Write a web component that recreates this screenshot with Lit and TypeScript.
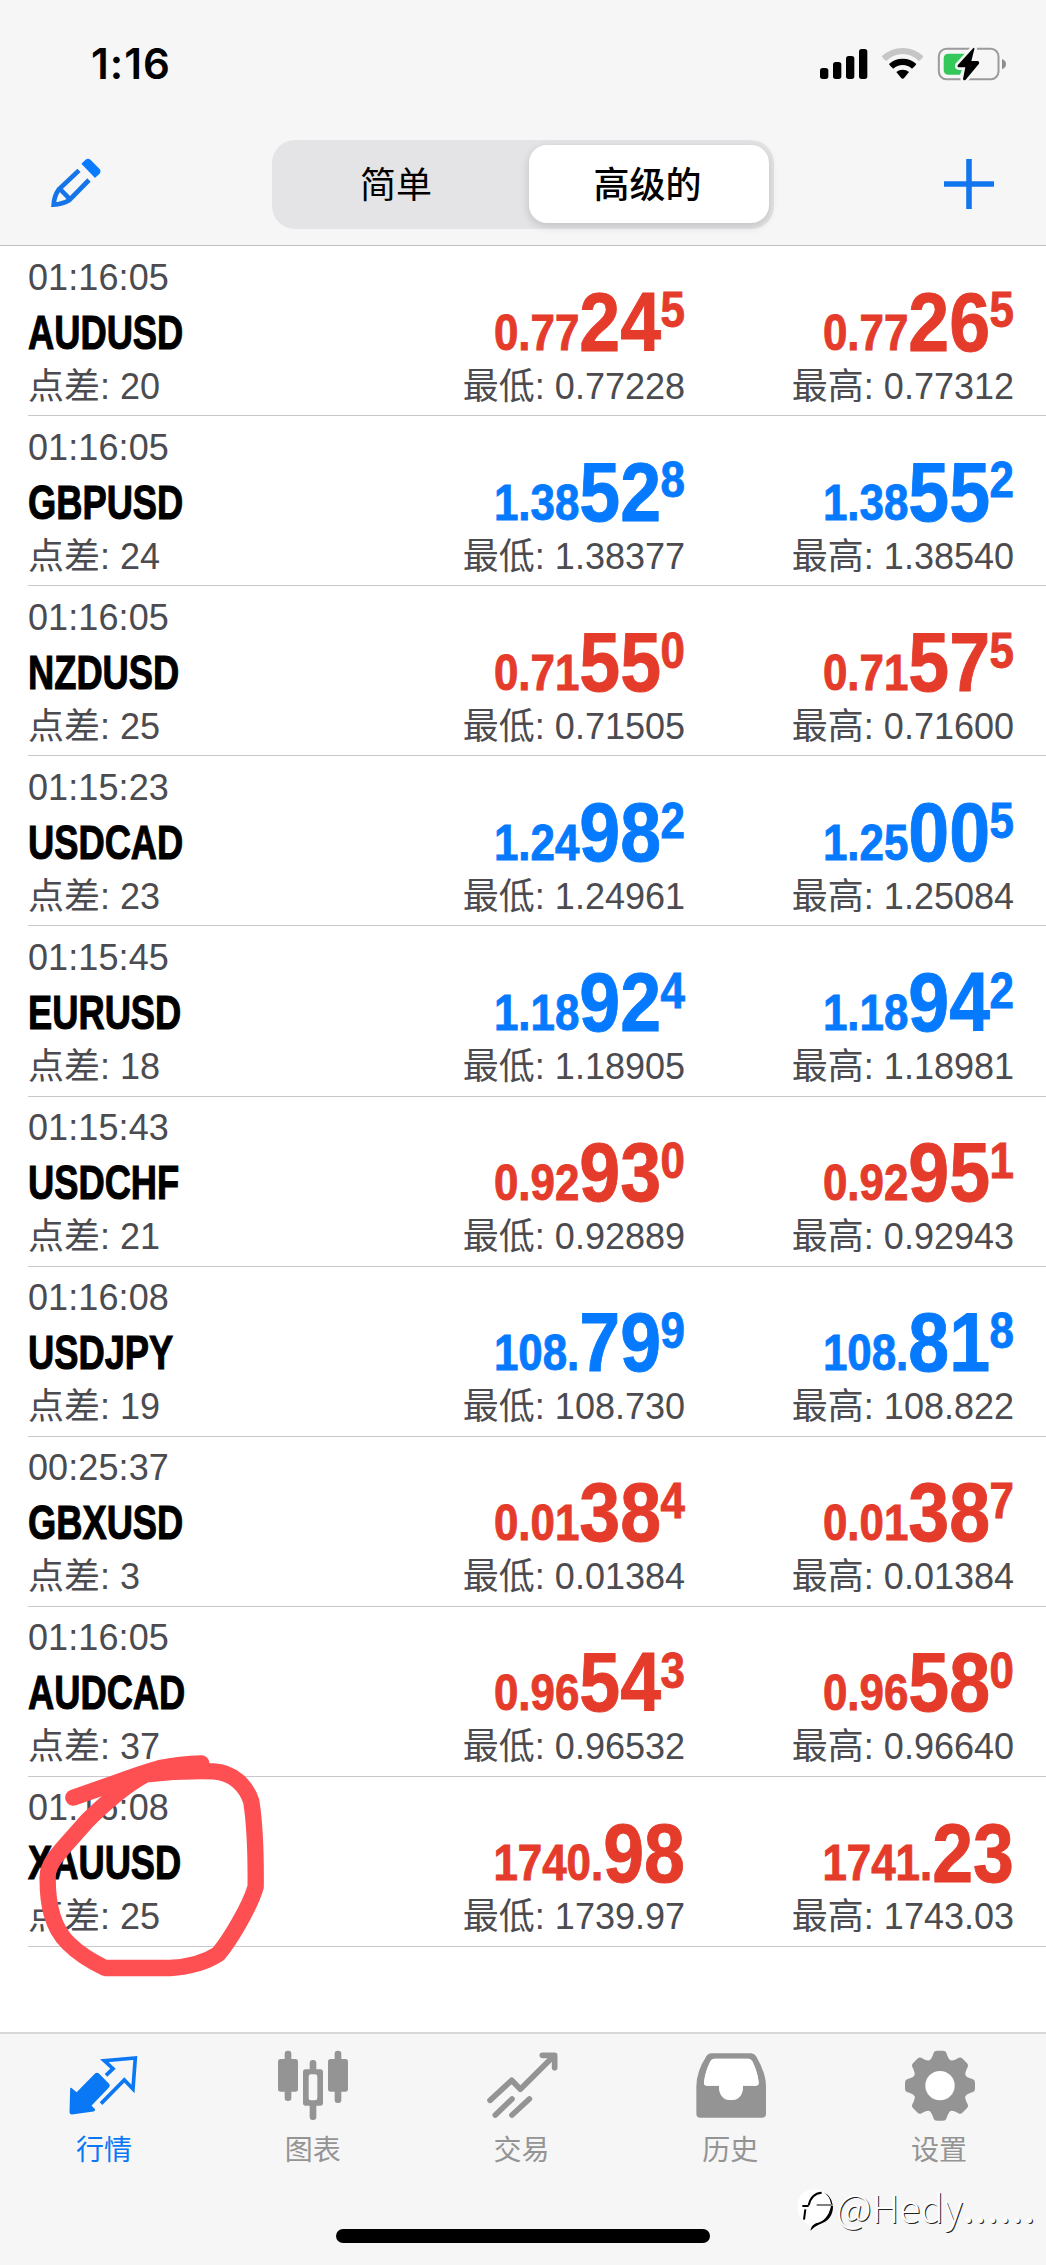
import { LitElement, html, css, svg } from "lit";
import { customElement, property } from "lit/decorators.js";
import { classMap } from "lit/directives/class-map.js";

type Price = [string, string, string];

interface Quote {
  time: string;
  symbol: string;
  spread: string;
  up: boolean;
  bid: Price;
  ask: Price;
  low: string;
  high: string;
}

const QUOTES: Quote[] = [
  { time: "01:16:05", symbol: "AUDUSD", spread: "20", up: false, bid: ["0.77", "24", "5"], ask: ["0.77", "26", "5"], low: "0.77228", high: "0.77312" },
  { time: "01:16:05", symbol: "GBPUSD", spread: "24", up: true, bid: ["1.38", "52", "8"], ask: ["1.38", "55", "2"], low: "1.38377", high: "1.38540" },
  { time: "01:16:05", symbol: "NZDUSD", spread: "25", up: false, bid: ["0.71", "55", "0"], ask: ["0.71", "57", "5"], low: "0.71505", high: "0.71600" },
  { time: "01:15:23", symbol: "USDCAD", spread: "23", up: true, bid: ["1.24", "98", "2"], ask: ["1.25", "00", "5"], low: "1.24961", high: "1.25084" },
  { time: "01:15:45", symbol: "EURUSD", spread: "18", up: true, bid: ["1.18", "92", "4"], ask: ["1.18", "94", "2"], low: "1.18905", high: "1.18981" },
  { time: "01:15:43", symbol: "USDCHF", spread: "21", up: false, bid: ["0.92", "93", "0"], ask: ["0.92", "95", "1"], low: "0.92889", high: "0.92943" },
  { time: "01:16:08", symbol: "USDJPY", spread: "19", up: true, bid: ["108.", "79", "9"], ask: ["108.", "81", "8"], low: "108.730", high: "108.822" },
  { time: "00:25:37", symbol: "GBXUSD", spread: "3", up: false, bid: ["0.01", "38", "4"], ask: ["0.01", "38", "7"], low: "0.01384", high: "0.01384" },
  { time: "01:16:05", symbol: "AUDCAD", spread: "37", up: false, bid: ["0.96", "54", "3"], ask: ["0.96", "58", "0"], low: "0.96532", high: "0.96640" },
  { time: "01:16:08", symbol: "XAUUSD", spread: "25", up: false, bid: ["1740.", "98", ""], ask: ["1741.", "23", ""], low: "1739.97", high: "1743.03" },
];

@customElement("quote-row")
class QuoteRow extends LitElement {
  @property({ attribute: false }) quote!: Quote;

  static styles = css`
    :host { display: block; padding-left: 28px; }
    .row {
      box-sizing: border-box;
      height: 170.11px;
      padding-top: 1px;
      display: grid;
      grid-template-columns: 328.500px 329px 329px;
      column-gap: 0;
      border-bottom: 1px solid #c8c7cc;
      font-family: "Liberation Sans", "Noto Sans CJK SC", sans-serif;
      color: #4b4b50;
    }
    .cell { display: flex; flex-direction: column; }
    .side { align-items: flex-end; padding-right: 0.5px; }
    .time, .note { font-size: 36px; line-height: 44px; white-space: pre; }
    .time { padding-top: 8.5px; letter-spacing: 0.1px; }
    .symbol {
      height: 65px;
      line-height: 65px;
      font-size: 36.3px;
      font-weight: 700;
      color: #000;
      -webkit-text-stroke: 0.8px #000;
      transform: scaleY(1.33);
      transform-origin: 0 31.5px;
    }
    .price {
      height: 117.5px;
      display: flex;
      align-items: flex-start;
      font-weight: 700;
      line-height: 60px;
      color: #e43b2b;
      -webkit-text-stroke: 0.8px currentColor;
    }
    .price.up { color: #067afe; }
    .lead, .point { font-size: 43.9px; transform: scaleY(1.13); transform-origin: 0 45.2px; }
    .lead { margin-top: 57.5px; }
    .pips { font-size: 73.5px; margin-top: 48.6px; transform: scaleY(1.14); transform-origin: 0 55.5px; }
    .point { margin-top: 35.3px; margin-left: -0.5px; }
  `;

  private price([lead, pips, point]: Price) {
    return html`<div class=${classMap({ price: true, up: this.quote.up })}>
      <span class="lead">${lead}</span><span class="pips">${pips}</span>${point ? html`<span class="point">${point}</span>` : ""}
    </div>`;
  }

  render() {
    const q = this.quote;
    return html`<div class="row">
      <div class="cell">
        <div class="time">${q.time}</div>
        <div class="symbol">${q.symbol}</div>
        <div class="note">点差: ${q.spread}</div>
      </div>
      <div class="cell side">${this.price(q.bid)}<div class="note">最低: ${q.low}</div></div>
      <div class="cell side">${this.price(q.ask)}<div class="note">最高: ${q.high}</div></div>
    </div>`;
  }
}

const gearTeeth = [0, 45, 90, 135, 180, 225, 270, 315];

const TABS = [
  {
    label: "行情",
    icon: svg`<svg viewBox="202 85 216 220" width="72" height="73.3">
      <path d="M214 207 L231 221 L288 163 Q292 160 296 163 L327 195 Q329 199 326 202 L272 258 L283 269 Q285 272 281 273 L216 282 Q212 282 212 278Z" fill="currentColor" stroke="currentColor" stroke-width="5" stroke-linejoin="round"/>
      <path d="M319 167 L340 147 L314 123 L407 115 L400 208 L374 181 L304 252" fill="none" stroke="currentColor" stroke-width="11"/></svg>`,
  },
  {
    label: "图表",
    icon: svg`<svg viewBox="830 85 216 220" width="72" height="73.3"><g fill="currentColor">
      <rect x="853" y="93" width="20" height="151" rx="9"/><rect x="833" y="118" width="60" height="98" rx="8"/>
      <rect x="1003" y="93" width="20" height="157" rx="9"/><rect x="983" y="118" width="60" height="98" rx="8"/>
      <rect x="928" y="121" width="20" height="40" rx="9"/><rect x="928" y="245" width="20" height="56" rx="9"/>
      <path fill-rule="evenodd" d="M916 149H960Q968 149 968 157V250Q968 258 960 258H916Q908 258 908 250V157Q908 149 916 149ZM931 164Q925 164 925 171V235Q925 242 931 242H944Q951 242 951 235V171Q951 164 944 164Z"/></g></svg>`,
  },
  {
    label: "交易",
    icon: svg`<svg viewBox="1457 85 216 220" width="72" height="73.3"><g fill="none" stroke="currentColor" stroke-width="17" stroke-linecap="round" stroke-linejoin="round">
      <path d="M1469 242L1534 182L1560 209L1658 111M1626 107H1663V144M1485 286L1535 238M1535 286L1587 238"/></g></svg>`,
  },
  {
    label: "历史",
    icon: svg`<svg viewBox="516 85 216 220" width="72" height="73.3"><path fill="currentColor" fill-rule="evenodd" d="M566 101H684Q694 101 699 109Q729 160 729 200V282Q729 294 717 294H532Q520 294 520 282V200Q520 155 551 108Q556 101 566 101ZM574 117Q566 117 562 125Q546 158 543 188Q542 198 551 198H588Q588 241 624 241Q660 241 660 198H699Q708 198 707 188Q704 158 688 125Q684 117 676 117Z"/>
      <path fill="#fff" d="M574 117Q566 117 562 125Q546 158 543 188Q542 198 551 198H588Q588 241 624 241Q660 241 660 198H699Q708 198 707 188Q704 158 688 125Q684 117 676 117Z"/></svg>`,
  },
  {
    label: "设置",
    icon: svg`<svg viewBox="1143 85 216 220" width="72" height="73.3"><g fill="currentColor">
      ${gearTeeth.map((a) => svg`<path transform="rotate(${a} 1251 198)" d="M1216 125Q1225 120 1229 108L1232 99Q1234 93 1242 93H1260Q1268 93 1270 99L1273 108Q1277 120 1286 125L1251 198Z"/>`)}
      <circle cx="1251" cy="198" r="79"/></g><circle cx="1251" cy="198" r="44" fill="#fff"/></svg>`,
  },
];

@customElement("app-root")
class AppRoot extends LitElement {
  static styles = css`
    :host {
      display: flex;
      flex-direction: column;
      position: relative;
      width: 1046px;
      height: 2265px;
      overflow: hidden;
      background: #fff;
      font-family: Inter, "Noto Sans CJK SC", sans-serif;
    }
    svg { display: block; }
    .header {
      box-sizing: border-box;
      height: 246px;
      flex: none;
      background: #f6f6f6;
      border-bottom: 1.5px solid #c1c1c3;
    }
    .status {
      box-sizing: border-box;
      height: 139px;
      padding: 39px 37px 0 91px;
      display: flex;
      justify-content: space-between;
      align-items: flex-start;
    }
    .clock { font-size: 42px; font-weight: 600; line-height: 50px; letter-spacing: 1px; }
    .nav {
      display: flex;
      justify-content: space-between;
      align-items: center;
      padding: 0 51px 0 50px;
      height: 90px;
    }
    .segments {
      box-sizing: border-box;
      display: flex;
      width: 502px;
      height: 89px;
      padding: 5px;
      border-radius: 23px;
      background: #e4e4e6;
      font-size: 36px;
      line-height: 80px;
      text-align: center;
    }
    .seg { flex: 1; padding-right: 13px; }
    .seg.on {
      box-sizing: border-box;
      flex: none;
      width: 240px;
      height: 78px;
      padding-right: 2px;
      border-radius: 18px;
      background: #fff;
      font-weight: 500;
      box-shadow: 0 3px 10px rgba(0, 0, 0, 0.16);
    }
    .list { flex: 1; }
    .tabbar {
      flex: none;
      box-sizing: border-box;
      height: 233px;
      background: #f6f6f6;
      border-top: 2px solid #d8d8da;
      display: flex;
      flex-direction: column;
      justify-content: space-between;
      align-items: center;
      padding-bottom: 22.5px;
    }
    .tabs { display: flex; width: 1046px; padding: 14px 2px 0 0; box-sizing: border-box; }
    .tab { flex: 1; display: flex; flex-direction: column; align-items: center; color: #949494; }
    .tab.active { color: #0a78f5; }
    .tab.active svg { margin-right: 2px; }
    .name { font-size: 28px; line-height: 40px; margin-top: 9px; margin-right: 1px; }
    .home { width: 374px; height: 14px; border-radius: 7px; background: #000; }
    .scribble { position: absolute; left: 0; top: 1740px; }
    .watermark {
      position: absolute;
      left: 796px;
      top: 2180px;
      display: flex;
      align-items: center;
      color: #fff;
      font: 300 39px/44px "Noto Sans CJK SC", sans-serif;
      text-shadow: 1px 1px 0.6px #222;
    }
    .mark { margin-top: 8px; }
    .handle { margin-left: 2px; }
    .dots { letter-spacing: 1.4px; font-weight: 400; }
  `;

  render() {
    return html`
      <header class="header">
        <div class="status">
          <span class="clock">1:16</span>
          <svg width="190" height="50" viewBox="887 117 570 150">
            <rect x="890" y="204" width="25" height="33" rx="8"/><rect x="929" y="186" width="25" height="51" rx="8"/>
            <rect x="968" y="168" width="25" height="69" rx="8"/><rect x="1007" y="147" width="25" height="90" rx="8"/>
            <path d="M1075 169Q1103 144 1138 144Q1173 144 1200 169Q1197 177 1187 183Q1165 162 1138 162Q1111 162 1089 183Q1079 177 1075 169Z" fill="#c6c6c6"/>
            <path d="M1097 192Q1114 176 1138 176Q1162 176 1179 192Q1175 200 1166 206Q1154 195 1138 195Q1122 195 1110 206Q1101 200 1097 192Z"/>
            <path d="M1119 216Q1127 209 1138 209Q1149 209 1157 216L1143 233Q1138 239 1133 233Z"/>
            <rect x="1246.500" y="146.500" width="179" height="91" rx="23" fill="none" stroke="#9b9b9b" stroke-width="6"/>
            <path d="M1436 177Q1448 182 1448 192Q1448 203 1436 208Z" fill="#8d8d8d"/>
            <path d="M1276 161H1335L1310 224H1276Q1261 224 1261 209V176Q1261 161 1276 161Z" fill="#34c759"/>
            <path d="M1350 144L1303 196Q1301 202 1308 202H1326L1319 237Q1321 244 1327 239L1367 191Q1369 184 1362 183H1344L1353 148Q1354 142 1350 144Z" stroke="#f6f6f6" stroke-width="16" stroke-linejoin="round" paint-order="stroke"/>
          </svg>
        </div>
        <nav class="nav">
          <svg width="52" height="52" viewBox="150 472 156 156">
            <path d="M247 489L258 479Q264 474 270 479L298 507Q301 512 298 517L285 529Z" fill="#0a7cff" stroke="#0a7cff" stroke-width="4" stroke-linejoin="round"/>
            <path d="M237 509L176 567Q163 585 161 612Q187 611 207 599L267 538M180 565L208 594" fill="none" stroke="#1575e8" stroke-width="14"/>
          </svg>
          <div class="segments"><div class="seg">简单</div><div class="seg on">高级的</div></div>
          <svg width="52" height="52" viewBox="0 0 52 52"><path d="M23.200 1H28.800V23.200H51V28.800H28.800V51H23.200V28.800H1V23.200H23.200Z" fill="#1277ee"/></svg>
        </nav>
      </header>
      <main class="list">${QUOTES.map((q) => html`<quote-row .quote=${q}></quote-row>`)}</main>
      <footer class="tabbar">
        <div class="tabs">
          ${TABS.map((t, i) => html`<div class=${classMap({ tab: true, active: i === 0 })}>${t.icon}<span class="name">${t.label}</span></div>`)}
        </div>
        <div class="home"></div>
      </footer>
      <svg class="scribble" width="350" height="260" viewBox="0 0 1050 780">
        <g fill="none" stroke="#fe5052" stroke-width="49" stroke-linecap="round" stroke-linejoin="round">
          <path d="M220 173L340 131Q420 101 480 84Q540 72 604 70"/>
          <path d="M640 94C560 92 490 97 438 103C390 128 325 180 262 242C190 325 143 365 143 410C142 490 155 560 205 610C245 650 290 672 315 684H510C580 680 620 665 655 642C690 600 750 500 767 440C768 330 764 250 754 185C740 140 700 96 640 94Z"/>
        </g>
      </svg>
      <div class="watermark">
        <svg class="mark" width="38" height="44" viewBox="20 50 114 132">
          <path d="M24 105Q26 56 78 54Q126 56 131 103Q128 150 62 178L64 162Q26 150 24 105Z" fill="#fff"/>
          <path d="M58 102Q66 66 97 64" fill="none" stroke="#000" stroke-width="6"/>
          <path d="M39 104H58M48 114L44 145" fill="none" stroke="#000" stroke-width="6"/>
          <path d="M82 101H130" fill="none" stroke="#000" stroke-width="3"/>
          <path d="M102 63Q124 70 130 100L125 97Q120 72 102 63ZM131 104Q132 146 88 160Q74 166 63 178Q66 162 80 156Q116 148 125 104Z"/>
        </svg>
        <span class="handle">@Hedy<span class="dots">......</span></span>
      </div>
    `;
  }
}
